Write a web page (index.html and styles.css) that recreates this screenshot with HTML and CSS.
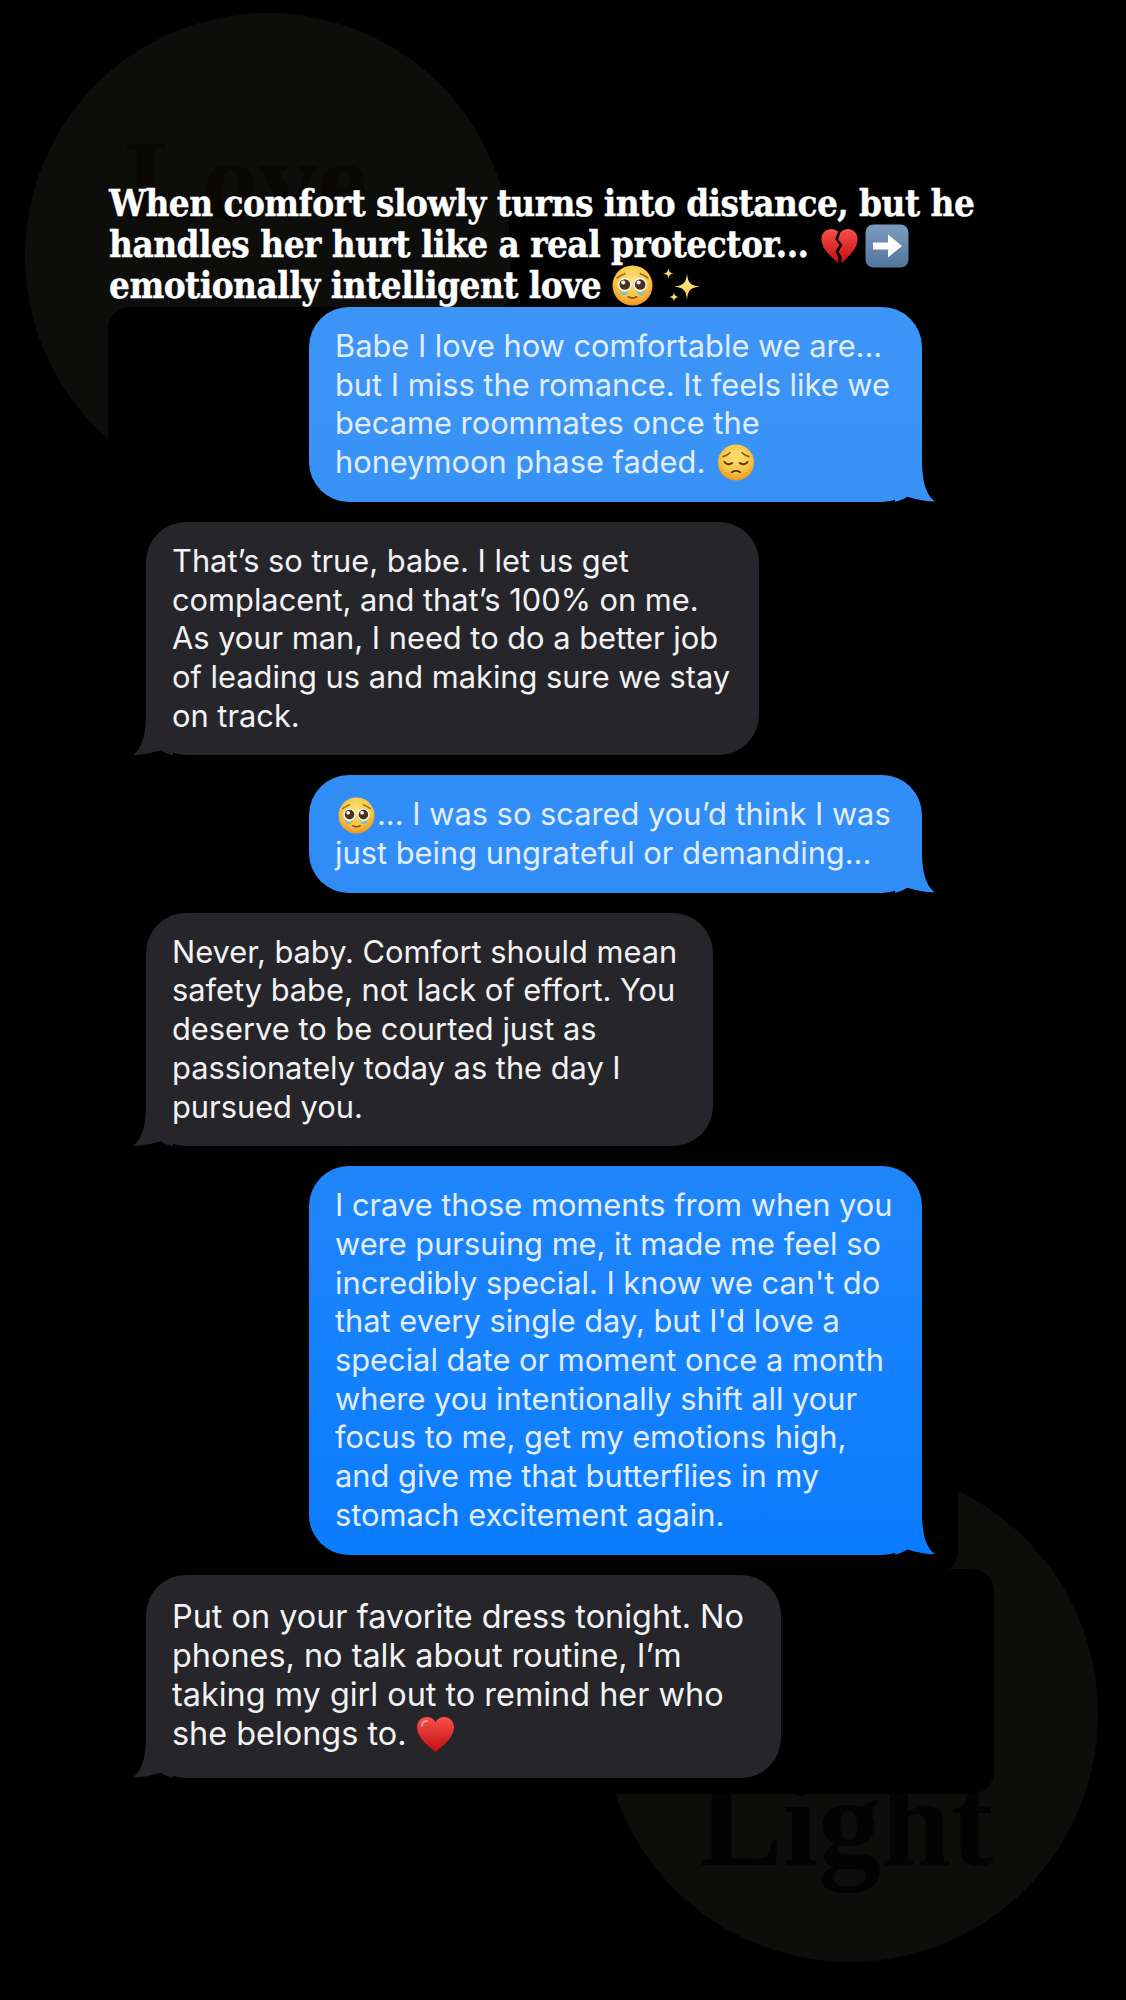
FILE: index.html
```html
<!DOCTYPE html>
<html lang="en">
<head>
  <title>Emotionally intelligent love</title>
  <meta charset="UTF-8">
  <meta name="viewport" content="width=device-width, initial-scale=1">
  <link rel="stylesheet" href="styles.css">
</head>
<body>
  <!-- emoji drawn once, reused below -->
  <svg class="sprites" width="0" height="0" aria-hidden="true">
    <defs>
      <radialGradient id="faceFill" cx="50%" cy="35%" r="70%">
        <stop offset="0" stop-color="#fbe27a"/>
        <stop offset="0.6" stop-color="#f8c542"/>
        <stop offset="1" stop-color="#ee8a1e"/>
      </radialGradient>
      <linearGradient id="heartFill" x1="0" y1="0" x2="0" y2="1">
        <stop offset="0" stop-color="#f8504a"/>
        <stop offset="1" stop-color="#c40c12"/>
      </linearGradient>
      <linearGradient id="boxFill" x1="0" y1="0" x2="0" y2="1">
        <stop offset="0" stop-color="#7c9cc0"/>
        <stop offset="1" stop-color="#53759c"/>
      </linearGradient>
      <linearGradient id="starFill" x1="0" y1="0" x2="0" y2="1">
        <stop offset="0" stop-color="#fff2a0"/>
        <stop offset="1" stop-color="#f4c23c"/>
      </linearGradient>
      <symbol id="e-pleading" viewBox="0 0 40 40">
        <circle cx="20" cy="20" r="19.5" fill="url(#faceFill)"/>
        <path d="M5 12.5 C7.5 10.5 10 9.5 12.5 8.5 M35 12.5 C32.5 10.5 30 9.5 27.5 8.5" fill="none" stroke="#a8641a" stroke-width="1.6" stroke-linecap="round"/>
        <circle cx="12.5" cy="19" r="6.6" fill="#fff"/>
        <circle cx="27.5" cy="19" r="6.6" fill="#fff"/>
        <circle cx="12.5" cy="19" r="5.2" fill="#4a3020"/>
        <circle cx="27.5" cy="19" r="5.2" fill="#4a3020"/>
        <circle cx="11" cy="17" r="2" fill="#fff"/>
        <circle cx="26" cy="17" r="2" fill="#fff"/>
        <path d="M7 23 C8 27 12 29 16 25 C15 31 7 31 7 23Z M33 23 C32 27 28 29 24 25 C25 31 33 31 33 23Z" fill="#5cc4ee"/>
        <path d="M16 31 C18.5 32.6 21.5 32.6 24 31" fill="none" stroke="#8a4c14" stroke-width="1.6" stroke-linecap="round"/>
      </symbol>
      <symbol id="e-pensive" viewBox="0 0 40 40">
        <circle cx="20" cy="20" r="19.5" fill="url(#faceFill)"/>
        <path d="M6 13.5 C8.5 13 11.5 11.5 13.5 9.5 M34 13.5 C31.5 13 28.5 11.5 26.5 9.5" fill="none" stroke="#8a4c14" stroke-width="1.7" stroke-linecap="round"/>
        <path d="M7.5 19.5 C9.5 22.5 13.5 22.5 16 20.5 M32.5 19.5 C30.5 22.5 26.5 22.5 24 20.5" fill="none" stroke="#5a3212" stroke-width="2" stroke-linecap="round"/>
        <path d="M15.5 30.5 C18 28.8 22 28.8 24.5 30.5" fill="none" stroke="#5a3212" stroke-width="2" stroke-linecap="round"/>
      </symbol>
      <symbol id="e-heart" viewBox="0 0 40 40">
        <path d="M20 38 C12 31 1 23 1 12.5 C1 6 6 2 11 2 C15 2 18.5 4 20 7.5 C21.5 4 25 2 29 2 C34 2 39 6 39 12.5 C39 23 28 31 20 38Z" fill="url(#heartFill)"/>
        <path d="M6 11 C6 8 8.5 6 11 6" fill="none" stroke="#ff9d96" stroke-width="2.2" stroke-linecap="round"/>
      </symbol>
      <symbol id="e-broken" viewBox="0 0 40 40">
        <path d="M18.5 38 C11 31 1 23 1 12.5 C1 6 6 2 11 2 C14 2 16.5 3 18.5 5 L15.5 13 L20 19 L15.5 26 L19 32Z" fill="url(#heartFill)"/>
        <path d="M22 38.5 C29 31 39 23 39 12.5 C39 6 34 2 29 2 C26 2 23 3.5 21 5.5 L18.5 13 L23 19 L19 26 L22.5 32Z" fill="url(#heartFill)"/>
      </symbol>
      <symbol id="e-arrow" viewBox="0 0 44 44">
        <rect x="0.5" y="0.5" width="43" height="43" rx="8" fill="url(#boxFill)"/>
        <path d="M8 18.5 H23 V10.5 L37 22 L23 33.5 V25.5 H8Z" fill="#fff"/>
      </symbol>
      <symbol id="e-sparkles" viewBox="0 0 40 40">
        <path d="M25 8 C26 17 28.5 19.5 38 20.5 C28.5 21.5 26 24 25 34 C24 24 21.5 21.5 12 20.5 C21.5 19.5 24 17 25 8Z" fill="url(#starFill)"/>
        <path d="M6.5 2 C7 6 8 7 12 7.5 C8 8 7 9 6.5 13 C6 9 5 8 1 7.5 C5 7 6 6 6.5 2Z" fill="url(#starFill)"/>
        <path d="M12 26 C12.4 29.5 13.5 30.5 17 31 C13.5 31.5 12.4 32.5 12 36 C11.6 32.5 10.5 31.5 7 31 C10.5 30.5 11.6 29.5 12 26Z" fill="url(#starFill)"/>
      </symbol>
    </defs>
  </svg>

  <div class="page">
    <div class="backdrop">
      <div class="disc disc-top"><span class="disc-word word-love">Love</span></div>
      <div class="disc disc-bottom"><span class="disc-word word-light">Light</span></div>
      <div class="mask mask-top"></div>
      <div class="mask mask-sent"></div>
      <div class="mask mask-reply"></div>
    </div>

    <main class="content">
      <h1 class="caption">
        When comfort slowly turns into distance, but he<br>
        handles her hurt like a real protector... <svg class="emoji emoji-broken"><use href="#e-broken"/></svg><svg class="emoji emoji-arrow"><use href="#e-arrow"/></svg><br>
        emotionally intelligent love <svg class="emoji emoji-big"><use href="#e-pleading"/></svg> <svg class="emoji emoji-sparkles"><use href="#e-sparkles"/></svg>
      </h1>

      <div class="thread">
        <div class="bubble sent">
          Babe I love how comfortable we are...<br>
          but I miss the romance. It feels like we<br>
          became roommates once the<br>
          honeymoon phase faded. <svg class="emoji emoji-pensive"><use href="#e-pensive"/></svg>
        </div>
        <div class="bubble received width-613">
          That’s so true, babe. I let us get<br>
          complacent, and that’s 100% on me.<br>
          As your man, I need to do a better job<br>
          of leading us and making sure we stay<br>
          on track.
        </div>
        <div class="bubble sent">
          <svg class="emoji emoji-lead"><use href="#e-pleading"/></svg>... I was so scared you’d think I was<br>
          just being ungrateful or demanding...
        </div>
        <div class="bubble received width-567">
          Never, baby. Comfort should mean<br>
          safety babe, not lack of effort. You<br>
          deserve to be courted just as<br>
          passionately today as the day I<br>
          pursued you.
        </div>
        <div class="bubble sent">
          I crave those moments from when you<br>
          were pursuing me, it made me feel so<br>
          incredibly special. I know we can't do<br>
          that every single day, but I'd love a<br>
          special date or moment once a month<br>
          where you intentionally shift all your<br>
          focus to me, get my emotions high,<br>
          and give me that butterflies in my<br>
          stomach excitement again.
        </div>
        <div class="bubble received width-635 large">
          Put on your favorite dress tonight. No<br>
          phones, no talk about routine, I’m<br>
          taking my girl out to remind her who<br>
          she belongs to. <svg class="emoji emoji-heart"><use href="#e-heart"/></svg>
        </div>
      </div>
    </main>
  </div>
</body>
</html>
```

FILE: styles.css
```css
body {
  margin: 0;
  background-color: #000;
  font-family: Inter, "Liberation Sans", sans-serif;
}

.sprites {
  position: absolute;
}

.page {
  position: relative;
  width: 1126px;
  height: 2000px;
  overflow: hidden;
}

/* faint logo discs behind the chat */
.backdrop {
  position: absolute;
  inset: 0;
}

.disc {
  position: absolute;
  border-radius: 50%;
  background-color: #0d0d0c;
}

.disc-top {
  left: 25px;
  top: 13px;
  width: 486px;
  height: 486px;
}

.disc-bottom {
  left: 602px;
  top: 1466px;
  width: 496px;
  height: 496px;
}

.disc-word {
  position: absolute;
  font-family: "Liberation Serif", serif;
  font-weight: 700;
  line-height: 1;
}

.word-love {
  left: 100px;
  top: 110px;
  font-size: 115px;
  color: #090807;
}

.word-light {
  left: 97px;
  top: 294px;
  font-size: 126px;
  color: #040303;
}

.mask {
  position: absolute;
  background-color: #000;
}

.mask-top {
  left: 108px;
  top: 307px;
  width: 500px;
  height: 300px;
  border-top-left-radius: 22px;
}

.mask-sent {
  left: 560px;
  top: 1400px;
  width: 398px;
  height: 172px;
  border-bottom-right-radius: 20px;
}

.mask-reply {
  left: 560px;
  top: 1569px;
  width: 434px;
  height: 225px;
  border-radius: 22px;
}

.content {
  position: relative;
  padding-top: 183px;
}

.caption {
  height: 124px;
  margin: 0 0 0 109px;
  font-family: "DejaVu Serif", "Liberation Serif", serif;
  font-stretch: condensed;
  font-size: 36.5px;
  font-weight: 700;
  line-height: 41px;
  letter-spacing: -0.5px;
  color: #fff;
  white-space: nowrap;
  -webkit-text-stroke: 0.4px #fff;
}

.thread {
  display: flex;
  flex-direction: column;
  gap: 20px;
  padding: 0 204px 0 146px;
}

.bubble {
  position: relative;
  box-sizing: border-box;
  padding: 20px 26px;
  border-radius: 40px;
  font-size: 30.8px;
  line-height: 38.7px;
  white-space: nowrap;
}

.bubble::after {
  content: "";
  position: absolute;
  bottom: 0;
  width: 40px;
  height: 40px;
  clip-path: path("M27 0 C27 18 31 34 40 39.5 C32 40 22 38 12 35 C8 38 4 39 0 40 L0 0Z");
}

.sent {
  align-self: flex-end;
  width: 613px;
  color: #e2edfb;
  background: linear-gradient(180deg, #3d95f6 300px, #2f8cf7 900px, #0a7cff 1560px) fixed;
}

.sent::after {
  right: -13px;
  background: linear-gradient(180deg, #3d95f6 300px, #2f8cf7 900px, #0a7cff 1560px) fixed;
}

.received {
  align-self: flex-start;
  color: #f2f2f2;
  background-color: #26262a;
}

.received::after {
  left: -13px;
  background-color: #26262a;
  transform: scaleX(-1);
}

.width-613 {
  width: 613px;
}

.width-567 {
  width: 567px;
}

.width-635 {
  width: 635px;
}

/* last reply was pasted in at a bigger size */
.large {
  padding-top: 22px;
  padding-bottom: 24px;
  font-size: 32.4px;
  line-height: 39.3px;
}

/* emoji sit in the line without pushing it taller;
   the -12px margin also drops them 12px below the baseline */
.emoji {
  width: 38px;
  height: 37px;
  margin: -12px 0;
  vertical-align: 4.5px;
}

.emoji-pensive {
  margin-left: 3px;
}

.emoji-lead {
  margin-left: 3px;
  margin-right: 2px;
  width: 37px;
  vertical-align: 3.5px;
}

.emoji-heart {
  width: 39px;
  height: 39px;
  vertical-align: 3.5px;
}

.emoji-big {
  width: 41px;
  height: 41px;
  vertical-align: 4px;
}

.emoji-broken {
  width: 41px;
  height: 38px;
  vertical-align: 4px;
}

.emoji-arrow {
  width: 44px;
  height: 44px;
  margin-left: 5px;
  vertical-align: 1px;
}

.emoji-sparkles {
  width: 40px;
  height: 40px;
  margin-left: -2px;
  vertical-align: 4px;
}
```
